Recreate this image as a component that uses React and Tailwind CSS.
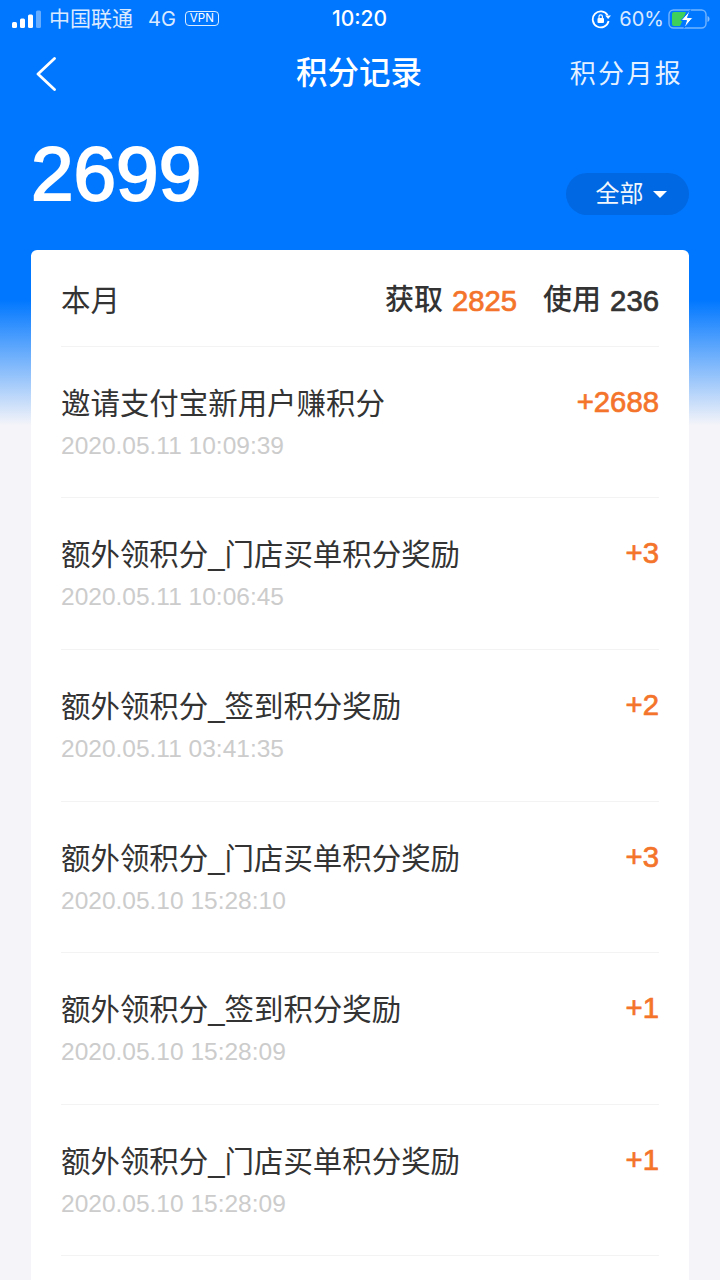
const records = [
  { title: '邀请支付宝新用户赚积分', time: '2020.05.11 10:09:39', points: '+2688' },
  { title: '额外领积分_门店买单积分奖励', time: '2020.05.11 10:06:45', points: '+3' },
  { title: '额外领积分_签到积分奖励', time: '2020.05.11 03:41:35', points: '+2' },
  { title: '额外领积分_门店买单积分奖励', time: '2020.05.10 15:28:10', points: '+3' },
  { title: '额外领积分_签到积分奖励', time: '2020.05.10 15:28:09', points: '+1' },
  { title: '额外领积分_门店买单积分奖励', time: '2020.05.10 15:28:09', points: '+1' },
];

const font = 'font-["Liberation_Sans","Noto_Sans_CJK_SC",sans-serif]';

function StatusBar() {
  return (
    <div className="h-[37px] flex items-center justify-between pl-3 pr-[10px] text-white">
      <div className="flex items-center w-[260px]">
        <svg width="30" height="18" viewBox="0 0 30 18" className="mr-[7px]">
          <rect x="0" y="12" width="5" height="6" rx="1.5" fill="#fff" />
          <rect x="8" y="8.5" width="5" height="9.5" rx="1.5" fill="#fff" />
          <rect x="16" y="4.5" width="5" height="13.5" rx="1.5" fill="#fff" />
          <rect x="24" y="0.5" width="5" height="17.5" rx="1.5" fill="#fff" fillOpacity="0.4" />
        </svg>
        <span className="text-[21px] leading-none opacity-85">中国联通</span>
        <span className="ml-[15px] text-[20px] leading-none font-['Inter',sans-serif] opacity-85">4G</span>
        <span className="ml-[9px] h-[15px] w-[34px] border-[1.5px] border-white/85 rounded-[4px] text-[11.5px] leading-[12px] text-center font-['Inter',sans-serif]">VPN</span>
      </div>
      <span className="text-[21px] leading-none font-['Inter',sans-serif] font-medium mr-[3px]">10:20</span>
      <div className="flex items-center justify-end w-[260px]">
        <svg width="21" height="20" viewBox="0 0 21 20" className="mr-[7px]" fill="none">
          <path d="M16.6 6.2A8 8 0 1 0 17.6 12" stroke="#fff" strokeWidth="1.8" />
          <path d="M14.2 6.6h5.800l-2.900 3.400z" fill="#fff" />
          <rect x="6.500" y="9" width="6.500" height="5" rx="1" fill="#fff" />
          <path d="M8 9V7.600a1.700 1.700 0 0 1 3.400 0V9" stroke="#fff" strokeWidth="1.200" />
        </svg>
        <span className="text-[20px] leading-none font-['Inter',sans-serif] opacity-85">60%</span>
        <svg width="42" height="20" viewBox="0 0 42 20" className="ml-[4px]" fill="none">
          <rect x="1" y="1" width="37" height="18" rx="4.500" stroke="#fff" strokeOpacity="0.45" strokeWidth="1.400" />
          <path d="M6 3h12l-3 7.500-3 6.500H6a2 2 0 0 1-2-2V5a2 2 0 0 1 2-2z" fill="#3fcf5b" />
          <path d="M39.500 7v6c1.300-.5 2-1.700 2-3s-.7-2.500-2-3z" fill="#fff" fillOpacity="0.5" />
          <path d="M22.500 0.800 13 11.500h5.500L16 19.200 25 8.500h-5.500z" fill="#fff" stroke="#0077ff" strokeWidth="1" />
        </svg>
      </div>
    </div>
  );
}

function NavBar() {
  return (
    <div className="h-[73px] flex items-center justify-between pl-[35px] pr-[37px] text-white">
      <svg width="22" height="34" viewBox="0 0 22 34" fill="none" className="w-[200px]" preserveAspectRatio="xMinYMid meet">
        <path d="M19.500 1.500 3 17l16.500 15.500" stroke="#fff" strokeWidth="2.800" strokeLinecap="round" strokeLinejoin="round" />
      </svg>
      <span className="text-[31.500px] leading-none font-medium">积分记录</span>
      <span className="text-[26px] leading-none tracking-[2.300px] w-[200px] text-right opacity-90">积分月报</span>
    </div>
  );
}

function RecordRow({ record }) {
  return (
    <div className="h-[151.600px] border-t border-[#f3f3f3] flex justify-between pt-[37px]">
      <div>
        <div className="text-[29.450px] leading-[40px] text-[#333]">{record.title}</div>
        <div className="mt-[8px] text-[24.500px] leading-[28px] text-[#cccccc]">{record.time}</div>
      </div>
      <div className="text-[29.300px] leading-[36px] text-[#f4742b] [-webkit-text-stroke:0.7px]">{record.points}</div>
    </div>
  );
}

export default function App() {
  return (
    <div className={`${font} w-[720px] h-[1280px] overflow-hidden bg-[linear-gradient(to_bottom,#0077ff_0px,#0077ff_300px,#f4f4f9_425px)]`}>
      <StatusBar />
      <NavBar />
      <div className="h-[140px] pl-[31px] pr-[31px] flex justify-between items-start">
        <span className="mt-[18px] text-[76.500px] leading-[92px] text-white [-webkit-text-stroke:2px]">2699</span>
        <div className="mt-[63px] w-[123px] h-[42px] rounded-full bg-[#0068e2] flex items-center justify-center gap-[9px] pl-[7px] text-white">
          <span className="text-[24px] leading-none opacity-95">全部</span>
          <span className="w-0 h-0 border-x-[7px] border-x-transparent border-t-[7px] border-t-white" />
        </div>
      </div>
      <div className="mx-[31px] bg-white rounded-t-[6px] px-[30px] h-[1100px]">
        <div className="h-[95.850px] pt-[5px] flex items-center justify-between">
          <span className="text-[29.500px] leading-none text-[#333]">本月</span>
          <div className="flex items-center text-[29px] leading-none text-[#333] font-medium">
            <span>获取</span>
            <span className="ml-[9px] text-[29.300px] text-[#f4742b] [-webkit-text-stroke:0.7px]">2825</span>
            <span className="ml-[26px]">使用</span>
            <span className="ml-[9px] text-[29.300px] [-webkit-text-stroke:0.7px]">236</span>
          </div>
        </div>
        {records.map((record, index) => (
          <RecordRow key={index} record={record} />
        ))}
        <div className="border-t border-[#f3f3f3]" />
      </div>
    </div>
  );
}
